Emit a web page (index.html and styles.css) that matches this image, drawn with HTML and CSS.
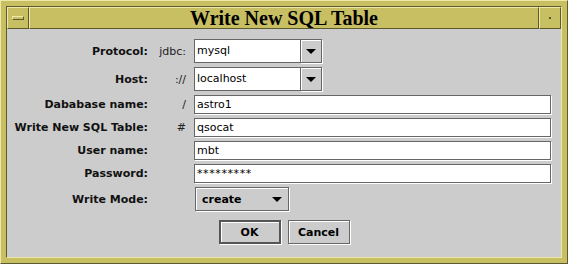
FILE: index.html
```html
<!DOCTYPE html>
<html>
<head>
    <title>Write New SQL Table</title>
    <link rel="stylesheet" href="styles.css">
</head>
<body>
    <div class="window">
        <div class="frame">
            <div class="titlebar">
                <div class="tb-btn menu-btn"><span class="bar"></span></div>
                <div class="title">Write New SQL Table</div>
                <div class="tb-btn close-btn"><span class="dot"></span></div>
            </div>
            <div class="content">
                <div class="form">
                    <div class="lbl">Protocol:</div>
                    <div class="pre">jdbc:</div>
                    <div class="combo edit">
                        <span class="combo-text">mysql</span>
                        <span class="combo-arrow"><i class="tri"></i></span>
                    </div>

                    <div class="lbl">Host:</div>
                    <div class="pre">://</div>
                    <div class="combo edit">
                        <span class="combo-text">localhost</span>
                        <span class="combo-arrow"><i class="tri"></i></span>
                    </div>

                    <div class="lbl">Dababase name:</div>
                    <div class="pre">/</div>
                    <div class="field">astro1</div>

                    <div class="lbl">Write New SQL Table:</div>
                    <div class="pre">#</div>
                    <div class="field">qsocat</div>

                    <div class="lbl">User name:</div>
                    <div class="pre"></div>
                    <div class="field">mbt</div>

                    <div class="lbl">Password:</div>
                    <div class="pre"></div>
                    <div class="field secret">*********</div>

                    <div class="lbl">Write Mode:</div>
                    <div class="pre"></div>
                    <div class="combo choice">
                        <span class="combo-text">create</span>
                        <i class="tri"></i>
                    </div>
                </div>
                <div class="buttons">
                    <button class="btn default">OK</button>
                    <button class="btn">Cancel</button>
                </div>
            </div>
        </div>
    </div>
</body>
</html>
```

FILE: styles.css
```css
body { margin: 0; background-color: #cccccc; font-family: "DejaVu Sans", sans-serif; font-size: 11px; color: #000; }
.window { width: 568px; height: 264px; box-sizing: border-box; background-color: #c8be62; padding: 5px;
          border: 1px solid; border-color: #eee8aa #5d5a2f #5d5a2f #eee8aa; }
.frame { height: 100%; box-sizing: border-box; display: flex; flex-direction: column;
         border: 1px solid; border-color: #5d5a2f #eee8aa #eee8aa #5d5a2f; }
.titlebar { display: flex; height: 22px; flex: none; }
.tb-btn, .title { box-sizing: border-box; background-color: #c8be62; border: 1px solid;
                  border-color: #eee8aa #5d5a2f #5d5a2f #eee8aa; }
.tb-btn { width: 22px; display: flex; align-items: center; justify-content: center; }
.title { flex: 1; text-align: center; font-family: "Liberation Serif", serif; font-weight: bold;
         font-size: 20px; line-height: 20px; color: #000; }
.menu-btn .bar { width: 12px; height: 4px; box-sizing: border-box; border: 1px solid;
                 border-color: #eee8aa #5d5a2f #5d5a2f #eee8aa; }
.close-btn .dot { width: 2px; height: 2px; background-color: #5d5a2f; }
.content { flex: 1; background-color: #cccccc; padding-top: 10px; }
.form { display: grid; grid-template-columns: 141px 46px 357px;
        grid-template-rows: 24px 24px 19px 19px 19px 19px 24px; row-gap: 4px; }
.lbl { font-weight: bold; text-align: right; align-self: center; white-space: nowrap; color: #111; }
.pre { text-align: right; padding-right: 8px; align-self: center; color: #222; }
.field { box-sizing: border-box; background-color: #fff; border: 1px solid #666666;
         box-shadow: 1px 1px 0 #fff; padding-left: 2px; line-height: 17px; }
.field.secret { letter-spacing: 0.6px; }
.combo { box-sizing: border-box; display: flex; align-items: stretch; justify-self: start; }
.combo.edit { width: 128px; }
.combo-text { flex: 1; }
.edit .combo-text { background-color: #fff; border: 1px solid #666666; border-right: none;
                    padding-left: 2px; line-height: 22px; }
.combo-arrow { width: 22px; box-sizing: border-box; display: flex; align-items: center; justify-content: center;
               border: 1px solid #666666; box-shadow: inset 1px 1px 0 #fff, 1px 1px 0 #fff; }
.tri { display: block; width: 0; height: 0; border-left: 5px solid transparent;
       border-right: 5px solid transparent; border-top: 5px solid #000; }
.combo.choice { width: 94px; margin-left: 1px; border: 1px solid #666666; align-items: center;
                box-shadow: inset 1px 1px 0 #fff, 1px 1px 0 #fff; padding: 0 6px 0 6px; }
.choice .combo-text { font-weight: bold; }
.buttons { display: flex; justify-content: center; gap: 7px; margin-top: 9px; }
.btn { width: 62px; height: 24px; box-sizing: border-box; background-color: #cccccc; font-family: "DejaVu Sans", sans-serif;
       font-size: 11px; font-weight: bold; color: #000; border: 1px solid #666666;
       box-shadow: inset 1px 1px 0 #fff, 1px 1px 0 #fff; padding: 0; }
.btn.default { border: 2px solid #555555; box-shadow: inset 1px 1px 0 #fff, 1px 1px 0 #fff; }
```
